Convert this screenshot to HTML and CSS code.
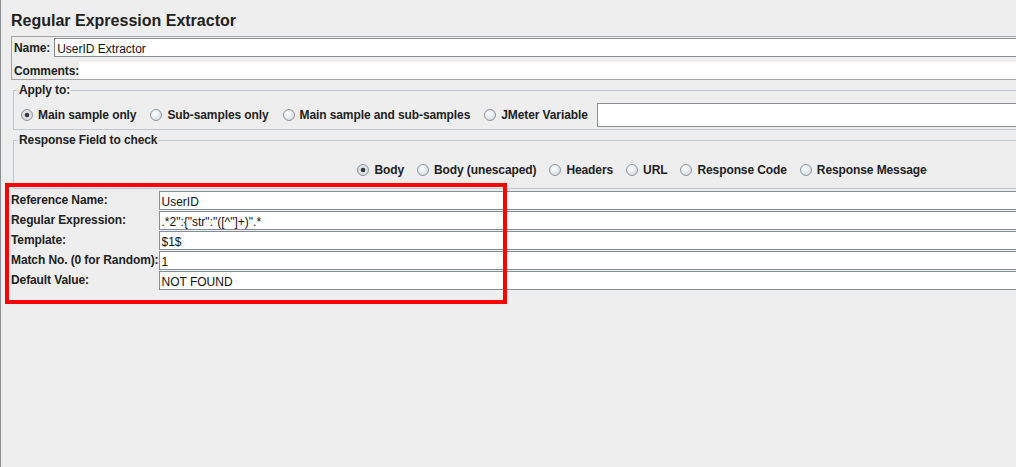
FILE: index.html
```html
<!DOCTYPE html>
<html lang="en">
<head>
  <meta charset="UTF-8" />
  <title>Regular Expression Extractor</title>
  <link rel="stylesheet" href="styles.css">
</head>
<body>
  <div class="page">
    <h1 class="title">Regular Expression Extractor</h1>

    <div class="name-panel">
      <div class="name-row">
        <label>Name:</label>
        <input class="field" type="text" value="UserID Extractor">
      </div>
      <div class="comments-row">
        <label>Comments:</label>
        <div class="comments"></div>
      </div>
    </div>

    <fieldset class="group apply">
      <legend>Apply to:</legend>
      <div class="radios">
        <span class="option"><span class="radio checked"></span>Main sample only</span>
        <span class="option"><span class="radio"></span>Sub-samples only</span>
        <span class="option"><span class="radio"></span>Main sample and sub-samples</span>
        <span class="option"><span class="radio"></span>JMeter Variable</span>
        <input class="field var-field" type="text" value="">
      </div>
    </fieldset>

    <fieldset class="group response">
      <legend>Response Field to check</legend>
      <div class="radios centered">
        <span class="option"><span class="radio checked"></span>Body</span>
        <span class="option"><span class="radio"></span>Body (unescaped)</span>
        <span class="option"><span class="radio"></span>Headers</span>
        <span class="option"><span class="radio"></span>URL</span>
        <span class="option"><span class="radio"></span>Response Code</span>
        <span class="option"><span class="radio"></span>Response Message</span>
      </div>
    </fieldset>

    <div class="fields">
      <label>Reference Name:</label>
      <input class="field" type="text" value="UserID">
      <label>Regular Expression:</label>
      <input class="field" type="text" value='.*2":{"str":"([^"]+)".*'>
      <label>Template:</label>
      <input class="field" type="text" value="$1$">
      <label>Match No. (0 for Random):</label>
      <input class="field" type="text" value="1">
      <label>Default Value:</label>
      <input class="field" type="text" value="NOT FOUND">
    </div>

    <div class="highlight"></div>
  </div>
</body>
</html>
```

FILE: styles.css
```css
html, body {
  margin: 0;
  overflow: hidden;
  background: #eeeeee;
}

body {
  font-family: "Liberation Sans", Arial, sans-serif;
  font-size: 12px;
  color: #222;
}

.page {
  position: relative;
  box-sizing: border-box;
  width: 1270px;
  height: 467px;
  padding-top: 11px;
  border-left: 1px solid #89929a;
}

.title {
  margin: 0 0 0 10px;
  font-size: 16px;
  line-height: 20px;
  font-weight: bold;
  color: #222;
}

label {
  font-weight: bold;
  letter-spacing: -0.1px;
  white-space: nowrap;
}

.field {
  box-sizing: border-box;
  height: 19px;
  margin: 0;
  padding: 3px 2px 0;
  border: 1px solid #838e97;
  border-radius: 0;
  background: #fff;
  font-family: "Liberation Sans", Arial, sans-serif;
  font-size: 12px;
  color: #111;
  outline: none;
}

/* name / comments */
.name-panel {
  margin: 5px 0 0 10px;
  border: 1px solid #a4a4a4;
  border-right: none;
  padding: 1px 0 0 1px;
}

.name-row {
  display: flex;
  align-items: flex-start;
  gap: 4px;
}

.name-row label {
  padding: 2px 0 0 1px;
  line-height: 17px;
}

.name-row .field {
  flex: 1;
}

.comments-row {
  display: flex;
  align-items: flex-end;
  height: 22px;
}

.comments-row label {
  padding-left: 1px;
  line-height: 16px;
}

.comments {
  flex: 1;
  height: 17px;
  background: #fff;
}

/* titled groups */
.group {
  margin: 0 0 0 12px;
  padding: 0 0 0 4px;
  border: 1px solid #bdc8d3;
  border-right: none;
  min-width: 0;
}

.group legend {
  padding: 0 1px;
  font-weight: bold;
  letter-spacing: -0.1px;
  line-height: 14px;
}

.apply {
  margin-top: 3px;
}

.response {
  margin-top: 3px;
  padding-right: 4px;
}

.radios {
  display: flex;
  align-items: center;
  gap: 14px;
  padding: 0 3px;
  font-weight: bold;
  letter-spacing: -0.1px;
  line-height: 14px;
  white-space: nowrap;
}

.apply .radios {
  height: 24px;
  padding-top: 6px;
  padding-bottom: 2px;
  padding-right: 0;
}

.response .radios {
  height: 16px;
  padding-top: 15px;
  padding-bottom: 10px;
  gap: 13px;
}

.centered {
  justify-content: center;
}

.option {
  display: flex;
  align-items: center;
  gap: 5px;
}

.radio {
  box-sizing: border-box;
  width: 12px;
  height: 12px;
  border: 1px solid #8a97a3;
  border-radius: 50%;
  background: radial-gradient(circle at 40% 35%, #ffffff 0%, #e8ecf0 45%, #c5cdd5 100%);
}

.radio.checked {
  background: radial-gradient(circle at 50% 50%, #2b2b2b 0%, #444 28%, #e4e8ec 38%, #c5cdd5 100%);
}

.var-field {
  flex: 1;
  height: 24px;
  margin-left: -5px;
}

/* extractor settings */
.fields {
  display: grid;
  grid-template-columns: auto 1fr;
  row-gap: 1px;
  margin: 2px 0 0 10px;
}

.fields label {
  line-height: 19px;
}

.fields .field {
  padding-left: 2px;
}

/* annotation drawn over the screenshot */
.highlight {
  position: absolute;
  left: 4px;
  top: 183px;
  width: 502px;
  height: 121px;
  box-sizing: border-box;
  border: 4px solid #ff0000;
}
```
